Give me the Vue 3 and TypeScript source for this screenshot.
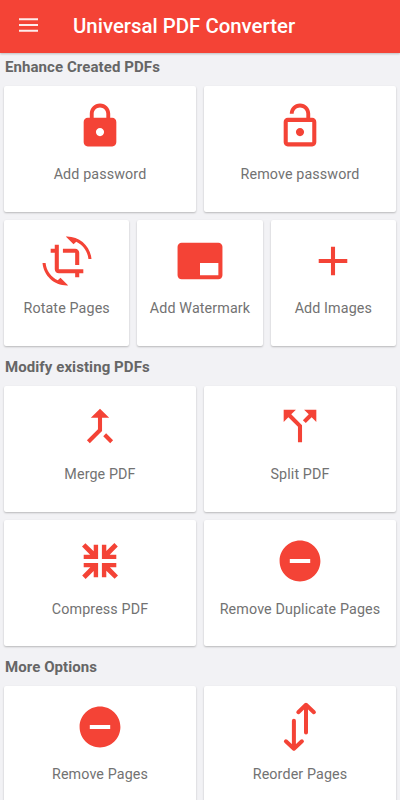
<script setup lang="ts">
interface Tool {
  label: string
  icon: string
}

interface Section {
  title: string
  rows: Tool[][]
}

const paths: Record<string, string> = {
  lock: 'M18 8h-1V6c0-2.76-2.24-5-5-5S7 3.24 7 6v2H6c-1.1 0-2 .9-2 2v10c0 1.1.9 2 2 2h12c1.1 0 2-.9 2-2V10c0-1.1-.9-2-2-2zm-6 9c-1.1 0-2-.9-2-2s.9-2 2-2 2 .9 2 2-.9 2-2 2zm3.1-9H8.9V6c0-1.71 1.39-3.1 3.1-3.1 1.71 0 3.1 1.39 3.1 3.1v2z',
  unlock: 'M12 17c1.1 0 2-.9 2-2s-.9-2-2-2-2 .9-2 2 .9 2 2 2zm6-9h-1V6c0-2.76-2.24-5-5-5S7 3.24 7 6h1.9c0-1.71 1.39-3.1 3.1-3.1 1.71 0 3.1 1.39 3.1 3.1v2H6c-1.1 0-2 .9-2 2v10c0 1.1.9 2 2 2h12c1.1 0 2-.9 2-2V10c0-1.1-.9-2-2-2zm0 12H6V10h12v10z',
  rotate: 'M7.47 21.49C4.2 19.93 1.86 16.76 1.5 13H0c.51 6.16 5.66 11 11.95 11 .23 0 .44-.02.66-.03L8.8 20.15l-1.33 1.34zM12.05 0c-.23 0-.44.02-.66.04l3.81 3.81 1.33-1.33C19.8 4.07 22.14 7.24 22.5 11H24c-.51-6.16-5.66-11-11.95-11zM16 14h2V8c0-1.11-.9-2-2-2h-6v2h6v6zm-8 2V4H6v2H4v2h2v8c0 1.1.89 2 2 2h8v2h2v-2h2v-2H8z',
  watermark: 'M21 3H3c-1.1 0-2 .9-2 2v14c0 1.1.9 2 2 2h18c1.1 0 2-.9 2-2V5c0-1.1-.9-2-2-2zm0 16h-9v-6h9v6z',
  add: 'M19 13h-6v6h-2v-6H5v-2h6V5h2v6h6v2z',
  merge: 'M17 20.41L18.41 19 15 15.59 13.59 17 17 20.41zM7.5 8H11v5.59L5.59 19 7 20.41l6-6V8h3.5L12 3.5 7.5 8z',
  split: 'M14 4l2.29 2.29-2.88 2.88 1.42 1.42 2.88-2.88L20 10V4zm-4 0H4v6l2.29-2.29 4.71 4.7V20h2v-8.41l-5.29-5.3z',
  remove: 'M12 2C6.48 2 2 6.48 2 12s4.48 10 10 10 10-4.48 10-10S17.52 2 12 2zm5 11H7v-2h10v2z',
}

const sections: Section[] = [
  {
    title: 'Enhance Created PDFs',
    rows: [
      [
        { label: 'Add password', icon: 'lock' },
        { label: 'Remove password', icon: 'unlock' },
      ],
      [
        { label: 'Rotate Pages', icon: 'rotate' },
        { label: 'Add Watermark', icon: 'watermark' },
        { label: 'Add Images', icon: 'add' },
      ],
    ],
  },
  {
    title: 'Modify existing PDFs',
    rows: [
      [
        { label: 'Merge PDF', icon: 'merge' },
        { label: 'Split PDF', icon: 'split' },
      ],
      [
        { label: 'Compress PDF', icon: 'compress' },
        { label: 'Remove Duplicate Pages', icon: 'remove' },
      ],
    ],
  },
  {
    title: 'More Options',
    rows: [
      [
        { label: 'Remove Pages', icon: 'remove' },
        { label: 'Reorder Pages', icon: 'reorder' },
      ],
    ],
  },
]
</script>

<template>
  <div class="app">
    <header class="bar">
      <svg class="menu" viewBox="0 0 20 14" aria-hidden="true">
        <path d="M0 0h20v2H0zM0 6h20v2H0zM0 12h20v2H0z" />
      </svg>
      <h1 class="title">Universal PDF Converter</h1>
    </header>
    <main>
      <section v-for="section in sections" :key="section.title" class="section">
        <h2 class="heading">{{ section.title }}</h2>
        <div v-for="(row, i) in section.rows" :key="i" class="row">
          <button v-for="tool in row" :key="tool.label" class="card" type="button">
            <svg v-if="tool.icon === 'compress'" class="icon" viewBox="-0.5 -0.5 50 50">
              <g v-for="angle in [0, 90, 180, 270]" :key="angle" :transform="`rotate(${angle} 24.5 24.5)`">
                <path d="M18.2 8.2h4.4v14.4H8.2v-4.4h6.4L6.5 10.1l3.4-3.4 8.3 8.1z" />
              </g>
            </svg>
            <svg v-else-if="tool.icon === 'reorder'" class="icon line" viewBox="-0.5 -0.5 50 50">
              <path d="M30.5 29.9V2.4M22.8 9.7l7.7-7.4 7.9 7.4" />
              <path d="M18.4 18.2v28M10.4 38.8l8 7.4 8-7.4" />
            </svg>
            <svg v-else class="icon" viewBox="-0.25 -0.25 24.5 24.5">
              <path :d="paths[tool.icon]" />
            </svg>
            <span class="label">{{ tool.label }}</span>
          </button>
        </div>
      </section>
    </main>
  </div>
</template>

<style>
body {
  margin: 0;
}
</style>

<style scoped>
.app {
  height: 800px;
  overflow: hidden;
  background: #f2f2f5;
  font-family: Roboto, "Liberation Sans", sans-serif;
}
.bar {
  position: relative;
  display: flex;
  align-items: center;
  box-sizing: border-box;
  height: 53px;
  padding-left: 19px;
  background: #f44336;
  box-shadow: 0 1px 2px rgba(0, 0, 0, 0.22);
}
.menu {
  width: 19px;
  height: 14px;
  margin-bottom: 4px;
  fill: #fff;
  opacity: 0.9;
}
.title {
  margin: 0 0 2px 35px;
  font-size: 20.4px;
  font-weight: 500;
  line-height: 24px;
  color: #fff;
  white-space: nowrap;
}
.heading {
  margin: 0;
  padding-left: 5px;
  font-size: 15px;
  font-weight: 700;
  line-height: 28.6px;
  letter-spacing: 0.08px;
  color: #666;
}
.section + .section {
  padding-top: 3px;
}
.row {
  display: flex;
  gap: 8px;
  padding: 4px;
}
.card {
  display: flex;
  flex: 1 1 0;
  flex-direction: column;
  align-items: center;
  box-sizing: border-box;
  min-width: 0;
  height: 126.3px;
  margin: 0;
  padding: 15.7px 0 0;
  border: 0;
  border-radius: 2px;
  background: #fff;
  box-shadow: 0 1px 2px rgba(0, 0, 0, 0.24);
  font-family: inherit;
}
.icon {
  flex: none;
  width: 50px;
  height: 50px;
  fill: #f44336;
}
.line {
  fill: none;
  stroke: #f44336;
  stroke-width: 4;
  stroke-linecap: round;
  stroke-linejoin: round;
}
.label {
  margin-top: 12.8px;
  font-size: 14.3px;
  font-weight: 400;
  line-height: 20px;
  letter-spacing: 0.12px;
  color: #727272;
  white-space: nowrap;
}
</style>
